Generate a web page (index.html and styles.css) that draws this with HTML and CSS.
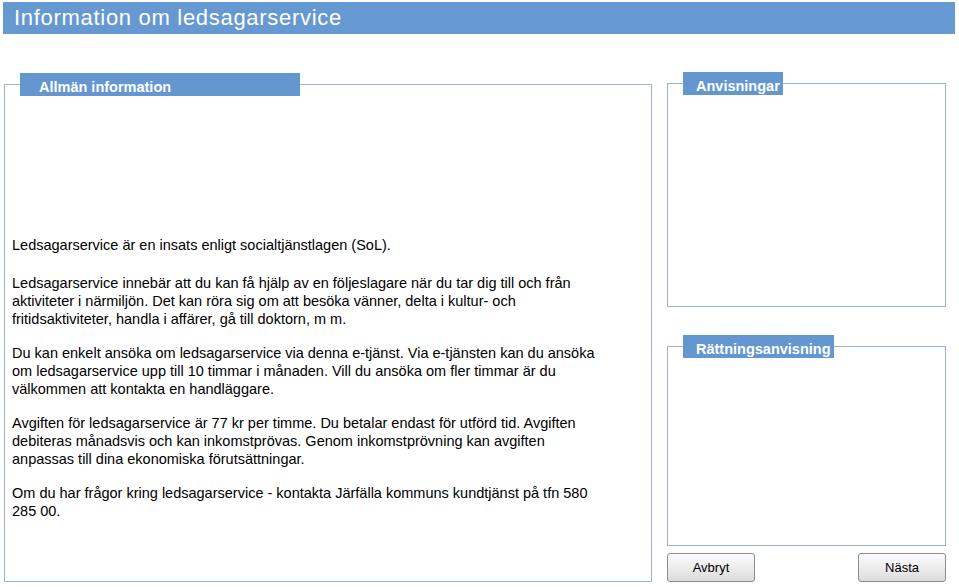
FILE: index.html
```html
<!DOCTYPE html>
<html lang="sv">
<head>
<meta charset="utf-8">
<title>Information om ledsagarservice</title>
<link rel="stylesheet" href="styles.css">
</head>
<body>
<header class="page-header">Information om ledsagarservice</header>
<main class="main">
  <fieldset class="panel panel-info">
    <legend class="tab tab-wide">Allmän information</legend>
    <div class="info-text">
      <p class="first">Ledsagarservice är en insats enligt socialtjänstlagen (SoL).</p>
      <p>Ledsagarservice innebär att du kan få hjälp av en följeslagare när du tar dig till och från aktiviteter i närmiljön. Det kan röra sig om att besöka vänner, delta i kultur- och fritidsaktiviteter, handla i affärer, gå till doktorn, m m.</p>
      <p>Du kan enkelt ansöka om ledsagarservice via denna e-tjänst. Via e-tjänsten kan du ansöka om ledsagarservice upp till 10 timmar i månaden. Vill du ansöka om fler timmar är du välkommen att kontakta en handläggare.</p>
      <p>Avgiften för ledsagarservice är 77 kr per timme. Du betalar endast för utförd tid. Avgiften debiteras månadsvis och kan inkomstprövas. Genom inkomstprövning kan avgiften anpassas till dina ekonomiska förutsättningar.</p>
      <p>Om du har frågor kring ledsagarservice - kontakta Järfälla kommuns kundtjänst på tfn 580 285 00.</p>
    </div>
  </fieldset>
  <div class="side">
    <fieldset class="panel panel-guide">
      <legend class="tab">Anvisningar</legend>
    </fieldset>
    <fieldset class="panel panel-correct">
      <legend class="tab">Rättningsanvisning</legend>
    </fieldset>
    <div class="buttons">
      <button class="btn" type="button">Avbryt</button>
      <button class="btn" type="button">Nästa</button>
    </div>
  </div>
</main>
</body>
</html>
```
FILE: styles.css
```css
* { box-sizing: border-box; }
html, body { margin: 0; padding: 0; background: #fff; }
body {
  font-family: "Liberation Sans", Arial, sans-serif;
  color: #000;
  width: 959px;
  height: 587px;
  overflow: hidden;
}
.page-header {
  margin: 2px 4px 0 3px;
  height: 32px;
  background: #6699d1;
  color: #fff;
  font-size: 22px;
  letter-spacing: 0.7px;
  line-height: 32px;
  padding-left: 11px;
}
.main {
  display: flex;
  gap: 15px;
  margin: 39px 0 0 4px;
  height: 509px;
}
.panel {
  margin: 0;
  padding: 0;
  border: 1px solid #9db3cf;
  min-inline-size: 0;
}
.tab {
  margin-left: 15px;
  padding: 5px 3px 0 13px;
  height: 23px;
  line-height: 18px;
  background: #6497d0;
  color: #fff;
  font-weight: bold;
  font-size: 14.5px;
}
.tab-wide {
  width: 280px;
  padding-left: 19px;
}
.panel-info {
  width: 648px;
  height: 509px;
}
.info-text {
  padding: 140px 7px 0 7px;
  width: 604px;
  font-size: 14.5px;
  line-height: 18px;
}
.info-text p { margin: 0 0 16px; }
.info-text p.first { margin-bottom: 20px; }
.side {
  width: 279px;
  display: flex;
  flex-direction: column;
}
.panel-guide { height: 236px; margin-top: -1px; }
.panel-correct { height: 211px; margin-top: 28px; }
.buttons {
  margin-top: 7px;
  display: flex;
  justify-content: space-between;
}
.btn {
  width: 88px;
  height: 29px;
  border: 1px solid #8c8c8c;
  border-radius: 3px;
  background: linear-gradient(#fdfdfd, #dcdcdc);
  font-family: "Liberation Sans", Arial, sans-serif;
  font-size: 13px;
  color: #000;
  padding: 0;
}
```
